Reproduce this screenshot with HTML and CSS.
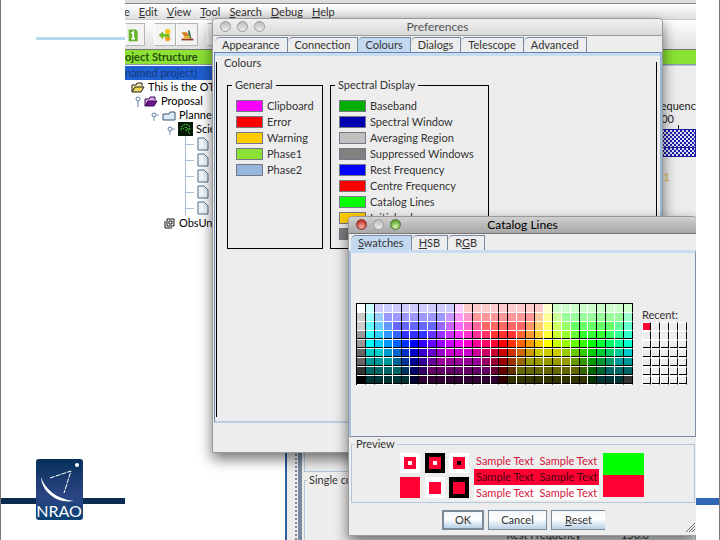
FILE: index.html
```html
<!DOCTYPE html>
<html lang="en">
<head>
<meta charset="utf-8">
<title>Preferences</title>
<link rel="stylesheet" href="styles.css">
</head>
<body>
<div class="slide">
  <aside class="margin-left">
    <div class="rule-light"></div>
    <div class="brand">
      <svg class="logo" viewBox="0 0 47 61" role="img" aria-label="NRAO">
        <defs><linearGradient id="sky" x1="0" y1="0" x2="0" y2="1"><stop offset="0" stop-color="#06305a"/><stop offset=".6" stop-color="#2c4585"/><stop offset="1" stop-color="#0a4274"/></linearGradient></defs>
        <rect width="47" height="61" rx="3" fill="url(#sky)"/>
        <path d="M5 18C9 30 20 40 38 42C22 45 6 34 5 18Z" fill="#fff"/>
        <path d="M14 19L35 12L28 34" fill="none" stroke="#fff" stroke-dasharray="5 1"/>
        <circle cx="41" cy="6" r="2" fill="#fff"/>
        <text x="23" y="58" text-anchor="middle" class="logo-text">NRAO</text>
      </svg>
    </div>
  </aside>

  <main class="app">
    <div class="app-edge"></div>
    <nav class="menubar">
      <a href="#">e</a><a href="#"><u>E</u>dit</a><a href="#"><u>V</u>iew</a><a href="#"><u>T</u>ool</a><a href="#"><u>S</u>earch</a><a href="#"><u>D</u>ebug</a><a href="#"><u>H</u>elp</a>
    </nav>
    <div class="toolbar">
      <button type="button" aria-label="New"><svg viewBox="0 0 20 20"><path d="M3 4h8l2 2v11H3z" fill="#67b52c"/><path d="M6 8l2-1v7M6 14h4" stroke="#fff" stroke-width="2" fill="none"/></svg></button>
      <button type="button" aria-label="Back"><svg viewBox="0 0 20 20"><circle cx="13" cy="6" r="3" fill="#f5c51c"/><circle cx="13" cy="14" r="3" fill="#e8a51c"/><path d="M3 10l5-4v3h7v3H8v3z" fill="#70be28"/></svg></button>
      <button type="button" aria-label="Library"><svg viewBox="0 0 20 20"><path d="M4 7h6l3 6H8z" fill="#d87b27"/><path d="M11 5h2l2 9h-3z" fill="#467a51"/><path d="M4 14h13v2H4z" fill="#943621"/><path d="M8 11h5v3H5z" fill="#e8b337"/></svg></button>
      <button type="button" class="apart" aria-label="Open"></button>
    </div>
    <div class="workspace">
      <section class="structure">
        <h2 class="bar-green">oject Structure</h2>
        <div class="project">named project)</div>
        <ul class="tree">
          <li class="d0"><svg class="folder" viewBox="0 0 14 11"><path d="M1 10V3h4l1-2h5v3" fill="#f4e9a0" stroke="#222"/><path d="M1 10l3-5h9l-3 5z" fill="#f1d75b" stroke="#222"/></svg>This is the OT</li>
          <li class="d1"><svg class="knob" viewBox="0 0 6 12"><circle cx="3" cy="4" r="2" fill="#fff" stroke="#5c7da8"/><path d="M3 6v6" stroke="#5c7da8"/></svg><svg class="folder" viewBox="0 0 14 11"><path d="M1 10V3h4l1-2h5v3" fill="#dca8e8" stroke="#3a0b55"/><path d="M1 10l3-5h9l-3 5z" fill="#6d1690" stroke="#3a0b55"/></svg>Proposal</li>
          <li class="d2"><svg class="knob wide" viewBox="0 0 8 12"><path d="M3 8v4M5 6h3" stroke="#7d98ba"/><circle cx="3" cy="6" r="2" fill="#fff" stroke="#5c7da8"/></svg><svg class="folder" viewBox="0 0 14 11"><path d="M1 10V4h6l1-2h5v8z" fill="#dbe9f6" stroke="#3c5570"/></svg>Planned</li>
          <li class="d3"><svg class="knob wide" viewBox="0 0 8 12"><path d="M3 8v4M5 6h3" stroke="#7d98ba"/><circle cx="3" cy="6" r="2" fill="#fff" stroke="#5c7da8"/></svg><svg class="science" viewBox="0 0 15 14"><rect width="15" height="14" fill="#051a05"/><path d="M3 8l1-4 3-2 4 1 1 4-2 3 2 2M5 7l2-2 3 1v2H7" fill="none" stroke="#3fd03f" stroke-dasharray="2 1"/></svg>Science</li>
          <li class="leaf"><svg class="doc" viewBox="0 0 12 14"><path d="M1 1h6l4 4v8H1z" fill="#f3f8fd" stroke="#4a708f"/></svg>F</li>
          <li class="leaf"><svg class="doc" viewBox="0 0 12 14"><path d="M1 1h6l4 4v8H1z" fill="#f3f8fd" stroke="#4a708f"/></svg>F</li>
          <li class="leaf"><svg class="doc" viewBox="0 0 12 14"><path d="M1 1h6l4 4v8H1z" fill="#f3f8fd" stroke="#4a708f"/></svg>C</li>
          <li class="leaf"><svg class="doc" viewBox="0 0 12 14"><path d="M1 1h6l4 4v8H1z" fill="#f3f8fd" stroke="#4a708f"/></svg><span class="picked">S</span></li>
          <li class="leaf"><svg class="doc" viewBox="0 0 12 14"><path d="M1 1h6l4 4v8H1z" fill="#f3f8fd" stroke="#4a708f"/></svg>C</li>
          <li class="unit"><svg class="stack" viewBox="0 0 11 11"><path d="M3 1h7v7H3zM1 3v7h7M5 3h3v3H5z" fill="none" stroke="#111"/></svg>ObsUnit</li>
        </ul>
      </section>
      <div class="splitter"></div>
      <section class="editor">
        <div class="bar-green"></div>
        <div class="plot">
          <div class="axis">equenc</div>
          <div class="tick">00</div>
          <div class="notch"></div>
          <div class="band"></div>
          <div class="band low"></div>
          <div class="mark">1</div>
        </div>
        <fieldset class="single"><legend>Single co</legend>
          <div class="rest"><span>Rest Frequency</span><span>150.0</span></div>
        </fieldset>
      </section>
    </div>

    <section class="window prefs" aria-label="Preferences">
      <header class="titlebar"><span class="lights"><i></i><i></i><i></i></span><h1>Preferences</h1></header>
      <div class="tabs">
        <button type="button">Appearance</button><button type="button">Connection</button><button type="button" class="on">Colours</button><button type="button">Dialogs</button><button type="button">Telescope</button><button type="button">Advanced</button>
      </div>
      <div class="page">
        <h2>Colours</h2>
        <div class="groups">
          <fieldset class="group"><legend>General</legend>
            <label><button type="button" class="chip magenta"></button>Clipboard</label>
            <label><button type="button" class="chip red"></button>Error</label>
            <label><button type="button" class="chip amber"></button>Warning</label>
            <label><button type="button" class="chip lime"></button>Phase1</label>
            <label><button type="button" class="chip sky"></button>Phase2</label>
          </fieldset>
          <fieldset class="group spectral"><legend>Spectral Display</legend>
            <label><button type="button" class="chip green"></button>Baseband</label>
            <label><button type="button" class="chip navy"></button>Spectral Window</label>
            <label><button type="button" class="chip silver"></button>Averaging Region</label>
            <label><button type="button" class="chip gray"></button>Suppressed Windows</label>
            <label><button type="button" class="chip blue"></button>Rest Frequency</label>
            <label><button type="button" class="chip red"></button>Centre Frequency</label>
            <label><button type="button" class="chip bright"></button>Catalog Lines</label>
            <label><button type="button" class="chip amber"></button>Initial value</label>
            <label><button type="button" class="chip gray" aria-label="Gray"></button></label>
          </fieldset>
        </div>
      </div>
    </section>

    <section class="window chooser" aria-label="Catalog Lines">
      <header class="titlebar"><span class="lights lit"><i></i><i></i><i></i></span><h1>Catalog Lines</h1></header>
      <div class="tabs">
        <button type="button" class="on"><u>S</u>watches</button><button type="button"><u>H</u>SB</button><button type="button">R<u>G</u>B</button>
      </div>
      <div class="picker">
        <div class="swatches" id="swatches"></div>
        <div class="recent"><span>Recent:</span><div class="slots" id="slots"></div></div>
      </div>
      <fieldset class="preview"><legend>Preview</legend>
        <svg class="squares" viewBox="0 0 70 46">
          <path d="M0 0h20v20H0z" fill="#fff"/><path d="M4 4h12v12H4z" fill="#ff0033"/><path d="M8 8h4v4H8z" fill="#fff"/>
          <path d="M25 0h20v20H25z"/><path d="M29 4h12v12H29z" fill="#ff0033"/><path d="M33 8h4v4h-4z" fill="#fff"/>
          <path d="M49 0h20v20H49z" fill="#fff"/><path d="M53 4h12v12H53z" fill="#ff0033"/><path d="M57 8h4v4h-4z"/>
          <path d="M0 24h20v21H0z" fill="#ff0033"/>
          <path d="M25 24h20v21H25z" fill="#fff"/><path d="M29 29h12v12H29z" fill="#ff0033"/>
          <path d="M49 24h20v21H49z"/><path d="M53 29h12v12H53z" fill="#ff0033"/>
        </svg>
        <div class="samples"><p>Sample Text&nbsp; Sample Text</p><p class="solid">Sample Text&nbsp; Sample Text</p><p class="white">Sample Text&nbsp; Sample Text</p></div>
        <div class="compare"></div>
      </fieldset>
      <footer class="actions"><button type="button" class="ok">OK</button><button type="button">Cancel</button><button type="button" class="reset"><u>R</u>eset</button>
        <svg class="grip" viewBox="0 0 10 10"><path d="M1 10L10 1M4 10l6-6M7 10l3-3" stroke="#666" fill="none"/></svg>
      </footer>
    </section>
  </main>
  <aside class="margin-right"><div class="rule-blue"></div></aside>
</div>
<script src="swatches.js"></script>
</body>
</html>
```
FILE: swatches.js
```js
const grays = [255, 204, 204, 153, 153, 102, 102, 51, 0];
const whiteEdges = [2, 3, 5, 7, 9, 11, 13, 14, 17, 20, 22, 23, 25, 28];

// Fully saturated hues, starting at cyan, in steps of 51.
function hue(col) {
  const i = col - 1;
  const step = (i % 5) * 51;
  const down = 255 - step;
  return [
    [0, down, 255], [step, 0, 255], [255, 0, down],
    [255, step, 0], [down, 255, 0], [0, 255, step]
  ][Math.floor(i / 5)];
}

function colour(row, col) {
  if (col === 0) return [grays[row], grays[row], grays[row]];
  if (row === 8 && col === 30) return [51, 51, 51];
  const floor = Math.max(0, 204 - 51 * row);
  const ceiling = Math.min(255, 255 - 51 * (row - 4));
  return hue(col).map(v => Math.min(ceiling, Math.max(floor, v)));
}

const swatches = document.getElementById("swatches");
for (let row = 0; row < 9; row++) {
  for (let col = 0; col < 31; col++) {
    const cell = document.createElement("i");
    cell.style.backgroundColor = `rgb(${colour(row, col)})`;
    if (!whiteEdges.includes(col)) cell.className = "dark-edge";
    swatches.append(cell);
  }
}

const slots = document.getElementById("slots");
for (let n = 0; n < 35; n++) slots.append(document.createElement("i"));
```
FILE: styles.css
```css
* { box-sizing: border-box; }
body { margin: 0; background: #fff; color: #333; font: 11px/16px Lato, "Open Sans", sans-serif; }
h1, h2, p, ul { margin: 0; padding: 0; font-size: 11px; font-weight: 400; }
ul { list-style: none; }
button { font: inherit; color: inherit; margin: 0; padding: 0; border: 0; background: none; }
fieldset { margin: 0; min-width: 0; }
a { color: inherit; text-decoration: none; }
svg { display: block; flex: none; }

.slide { display: grid; grid-template-columns: 124px 1fr 23px; height: 100vh; min-height: 540px; border-left: 1px solid #777; border-right: 1px solid #777; }
.margin-left { display: flex; flex-direction: column; justify-content: space-between; padding: 37px 0 20px; }
.rule-light { height: 3px; margin-left: 35px; background: #b5dcee; }
.brand { padding-left: 35px; background: linear-gradient(#0b2c50, #0b2c50) 0 39px / 100% 6px no-repeat; }
.logo { width: 47px; height: 61px; }
.logo-text { font: 400 16px Lato, sans-serif; fill: #fff; }
.margin-right { display: flex; align-items: flex-end; padding-bottom: 35px; }
.rule-blue { flex: 1; height: 7px; background: #2f66b8; }

.app { position: relative; overflow: hidden; display: flex; flex-direction: column; background: #ededed; }
.app-edge { height: 4px; flex: none; background: #ddd; border-bottom: 1px solid #888; }
.menubar { display: flex; flex: none; gap: 9px; height: 16px; margin-left: -1px; background: linear-gradient(#fff, #dedede); border-bottom: 1px solid #ccc; }
.toolbar { display: flex; flex: none; height: 29px; padding: 3px 0; background: linear-gradient(#fff, #e0e0e0); }
.toolbar button { width: 22px; border: 1px solid #b5b5b5; border-left-color: #fff; background: #f3f3f3; }
.toolbar button:first-child { width: 20px; margin-right: 9px; }
.toolbar .apart { margin-left: 9px; }
.toolbar svg { width: 18px; height: 20px; margin: auto; }
.workspace { display: grid; grid-template-columns: 160px 17px 1fr; flex: 1; min-height: 0; }
.bar-green { height: 16px; line-height: 14px; background: #8be234; border-top: 1px solid #777; border-bottom: 1px solid #8798a8; font-weight: 700; color: #284f0c; }
.structure { background: #fff; overflow: hidden; white-space: nowrap; }
.project { height: 14px; margin-top: 1px; line-height: 14px; background: #1f5fd0; color: #12387c; }
.tree { color: #000; }
.tree li { display: flex; align-items: center; height: 14px; gap: 3px; }
.d0 { padding-left: 6px; }
.d1 { padding-left: 10px; }
.d2 { padding-left: 26px; }
.d3 { padding-left: 42px; }
.folder { width: 14px; height: 11px; }
.knob { width: 6px; height: 12px; }
.knob.wide { width: 8px; }
.science { width: 15px; height: 14px; }
.doc { width: 12px; height: 14px; }
.stack { width: 11px; height: 11px; }
.tree .leaf { height: 16px; margin-left: 60px; border-left: 1px solid #a8bdd4; }
.leaf::before { content: ""; width: 8px; height: 1px; background: #a8bdd4; }
.tree .unit { padding-left: 39px; gap: 4px; }
.picked { background: #ccd9ea; }
.splitter { border-left: 2px solid #2e5f9f; border-right: 4px solid #7789a0; background: linear-gradient(#ececec, #ececec) 0 0 / 7px 100% no-repeat, radial-gradient(circle, #7a8ba8 0 1px, transparent 1px) 7px 0 / 4px 4px, #ececec; }
.editor { display: flex; flex-direction: column; min-width: 0; overflow: hidden; }
.plot { padding-top: 33px; text-align: right; color: #222; flex: 1; margin-left: 2px; border: solid #b5c7d6; border-width: 1px 0 1px 1px; }
.axis, .tick { line-height: 13px; }
.tick { padding-right: 22px; }
.notch { width: 1px; height: 4px; margin: 0 17px 0 auto; background: #222; }
.band { height: 19px; border: 1px solid #1c1c9d; background: repeating-conic-gradient(#1c1ca8 0 25%, #dfe0f6 0 50%) 0 0 / 4px 4px; }
.band.low { height: 9px; border-top: 0; }
.mark { padding: 12px 26px 0 0; color: #dcb444; }
.single { flex: none; height: 68px; padding: 0 4px; border: 1px solid #b5c7d6; border-bottom: 0; margin-left: 2px; }
.single legend { padding: 0 2px; margin-left: -2px; }
.rest { display: flex; gap: 40px; justify-content: flex-end; padding: 39px 42px 0 0; }

.window { position: absolute; display: flex; flex-direction: column; background: #ededed; border: 1px solid #999; border-radius: 4px 4px 0 0; box-shadow: 0 6px 14px rgba(0, 0, 0, .55); }
.prefs { left: 87px; right: 33px; top: 18px; height: 435px; }
.chooser { left: 223px; right: -1px; top: 216px; height: 320px; }
.titlebar { display: grid; grid-template-columns: 1fr auto 1fr; flex: none; height: 17px; line-height: 16px; background: linear-gradient(#f0f0f0, #dadada); border-bottom: 1px solid #999; border-radius: 4px 4px 0 0; color: #555; }
.titlebar h1 { font-size: 12px; }
.chooser .titlebar { background: linear-gradient(#cfcfcf, #a8a8a8); border-color: #777; color: #000; }
.lights { display: flex; gap: 6px; padding: 2px 0 0 7px; }
.lights i { width: 11px; height: 11px; border: 1px solid #999; border-radius: 50%; background: linear-gradient(#bbb, #eee); }
.lit i:first-child { background: radial-gradient(circle at 50% 75%, #f3b1a8, #c33a30 70%); border-color: #81322c; }
.lit i:last-child { background: radial-gradient(circle at 50% 75%, #dcf5b4, #62a832 70%); border-color: #4f7335; }
.tabs { display: flex; flex: none; height: 15px; margin: 1px 2px 0; }
.tabs button { padding: 0 7px; line-height: 14px; border: 1px solid #7a8aa2; border-left: 0; border-bottom: 0; border-radius: 5px 0 0 0; }
.tabs .on { background: #c3d9f1; }
.prefs .page { flex: 1; display: flex; flex-direction: column; margin: 0 0 29px 1px; padding: 3px 3px 4px 1px; border: 1px solid #6382ad; border-right: 2px solid #9db7d8; border-bottom: 2px solid #b8cfe5; box-shadow: inset 0 3px #c8ddf2; }
.page h2 { padding-left: 8px; line-height: 14px; }
.groups { flex: 1; display: flex; align-items: flex-start; gap: 7px; margin-top: -8px; padding: 16px 10px; border: solid #000; border-width: 0 1px; }
.group { width: 96px; height: 171px; padding: 6px 8px 0; border: 1px solid #000; }
.group.spectral { width: 159px; }
.group legend { padding: 0 3px; margin-left: -4px; line-height: 14px; }
.group label { display: flex; align-items: center; gap: 4px; height: 16px; white-space: nowrap; }
.chip { width: 27px; height: 12px; border: 1px solid #778; }
.magenta { background: #f0f; }
.red { background: #f00; }
.amber { background: #fc0; }
.lime { background: #8be234; }
.sky { background: #97b6de; }
.green { background: #00ae00; }
.navy { background: #0000ae; }
.silver { background: #c0c0c0; }
.gray { background: #808080; }
.blue { background: #00f; }
.bright { background: #0f0; }

.picker { display: flex; flex: 1; align-items: flex-start; gap: 9px; padding: 50px 0 0 5px; border: 1px solid #7d8da5; border-left: 2px solid #a6bfdc; border-top: 3px solid #c8ddf2; }
.swatches { display: grid; grid-template-columns: repeat(31, 1fr); grid-auto-rows: 9px; width: 277px; border: solid #000; border-width: 1px 0 0 1px; }
.swatches i { border: solid #fff; border-width: 0 1px 1px 0; }
.swatches i:nth-child(n + 94) { box-shadow: inset 0 -1px #000; }
.swatches .dark-edge { border-right-color: #000; }
.recent { padding-top: 4px; }
.recent span { display: block; line-height: 15px; }
.slots { display: grid; grid-template-columns: repeat(5, 9px); grid-auto-rows: 9px; }
.slots i { border: 1px solid #fff; border-right-color: #000; }
.slots i:nth-child(n + 11) { box-shadow: inset 0 -1px #000; }
.slots i:first-child { background: #ff0033; }
.preview { display: flex; flex: none; height: 66px; gap: 4px; margin: 0 1px 0 2px; padding: 2px 0 0 48px; border: 1px solid #b5c7d6; }
.preview legend { padding: 0 2px; margin-left: -46px; line-height: 14px; }
.squares { width: 70px; height: 46px; }
.samples { color: #d2143c; white-space: nowrap; }
.samples p { padding: 0 2px; height: 16px; line-height: 16px; }
.samples .solid { background: #ff0033; color: #4d0010; }
.samples .white { background: #fff; height: 15px; }
.compare { width: 41px; height: 44px; background: linear-gradient(#0f0 50%, #f03 50%); }
.actions { display: flex; flex: none; gap: 4px; padding: 7px 0 3px 93px; }
.actions button { width: 59px; height: 20px; border: 1px solid #7a8a99; background: linear-gradient(#f4f8fc, #fff 45%, #b8cfe5); }
.actions .ok { width: 42px; border-width: 2px; }
.actions .reset { width: 54px; border-right: 0; }
.grip { width: 10px; height: 10px; margin: 12px 1px 0 auto; }
```
